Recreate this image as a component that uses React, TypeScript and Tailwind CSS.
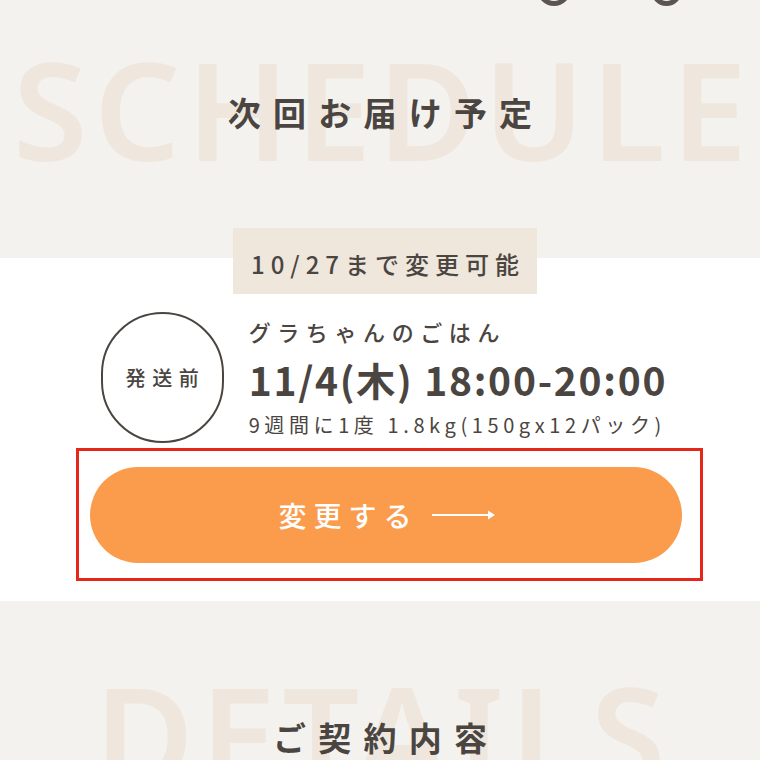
import React from 'react';

const jp = { fontFamily: '"Noto Sans CJK JP", "Noto Sans", sans-serif' };
const latin = { fontFamily: '"Noto Sans", "Noto Sans CJK JP", sans-serif' };

function Heading({ mark, title, shift }: { mark: string; title: string; shift: string }) {
    return (
        <div className="relative flex justify-center">
            <div
                style={latin}
                className="text-[136px] font-semibold leading-[100px] tracking-[0.045em] mr-[-0.045em] text-[#efe7de] select-none whitespace-nowrap"
            >
                {mark}
            </div>
            <div className={`absolute inset-0 flex items-center justify-center ${shift}`}>
                <h2 className="text-[33px] font-bold tracking-[0.37em] mr-[-0.37em] text-[#4b4541] whitespace-nowrap">
                    {title}
                </h2>
            </div>
        </div>
    );
}

export default function App() {
    return (
        <div style={jp} className="w-[760px] h-[760px] overflow-hidden bg-[#f4f2ee] text-[#4b4541]">
            <section className="relative h-[258px] bg-[#f4f2ee] pt-[59px]">
                <div className="absolute top-[-30px] left-[537px] flex gap-[80px]">
                    <span className="block w-[34px] h-[36px] rounded-full border-[5px] border-[#5a5551]" />
                    <span className="block w-[31px] h-[36px] rounded-full border-[5px] border-[#5a5551]" />
                </div>
                <Heading mark="SCHEDULE" title="次回お届け予定" shift="pt-[8px]" />
            </section>

            <section className="bg-white pb-[20px]">
                <div className="relative z-10 flex justify-center -mt-[30px] pl-[10px]">
                    <div className="bg-[#efe6dc] w-[304px] h-[66px] flex items-center justify-center pt-[6px]">
                        <span className="text-[24px] font-medium tracking-[0.25em] mr-[-0.25em]">10/27まで変更可能</span>
                    </div>
                </div>

                <div className="flex justify-center items-center gap-[25px] mt-[18px] pl-[8px]">
                    <div className="w-[123px] h-[131px] rounded-full border-2 border-[#4b4541] flex items-center justify-center">
                        <span className="text-[20px] font-medium tracking-[0.33em] mr-[-0.33em]">発送前</span>
                    </div>
                    <div className="flex flex-col whitespace-nowrap">
                        <p className="text-[22px] font-medium tracking-[0.3em] leading-[30px]">グラちゃんのごはん</p>
                        <p className="text-[39px] font-bold tracking-[0.045em] leading-[50px] mt-[8px]">
                            11/4(木) 18:00-20:00
                        </p>
                        <p className="text-[20px] tracking-[0.23em] leading-[28px] mt-[7px]">9週間に1度 1.8kg(150gx12パック)</p>
                    </div>
                </div>

                <div className="ml-[76px] mr-[57px] mt-[5px] border-[3px] border-[#e4261b] pt-[16px] pb-[15px] pl-[11px] pr-[18px]">
                    <button className="w-full h-[96px] rounded-full bg-[#fb9b4c] text-white flex items-center justify-center gap-[13px] pl-[2px]">
                        <span className="text-[28px] font-medium tracking-[0.25em]">変更する</span>
                        <svg width="64" height="12" viewBox="0 0 64 12" fill="none">
                            <path d="M0 6H60" stroke="white" strokeWidth="2" />
                            <path d="M56 1.5L63 6L56 10.5Z" fill="white" />
                        </svg>
                    </button>
                </div>
            </section>

            <section className="bg-[#f4f2ee] pt-[83px]">
                <Heading mark="DETAILS" title="ご契約内容" shift="pt-[8px]" />
            </section>
        </div>
    );
}
